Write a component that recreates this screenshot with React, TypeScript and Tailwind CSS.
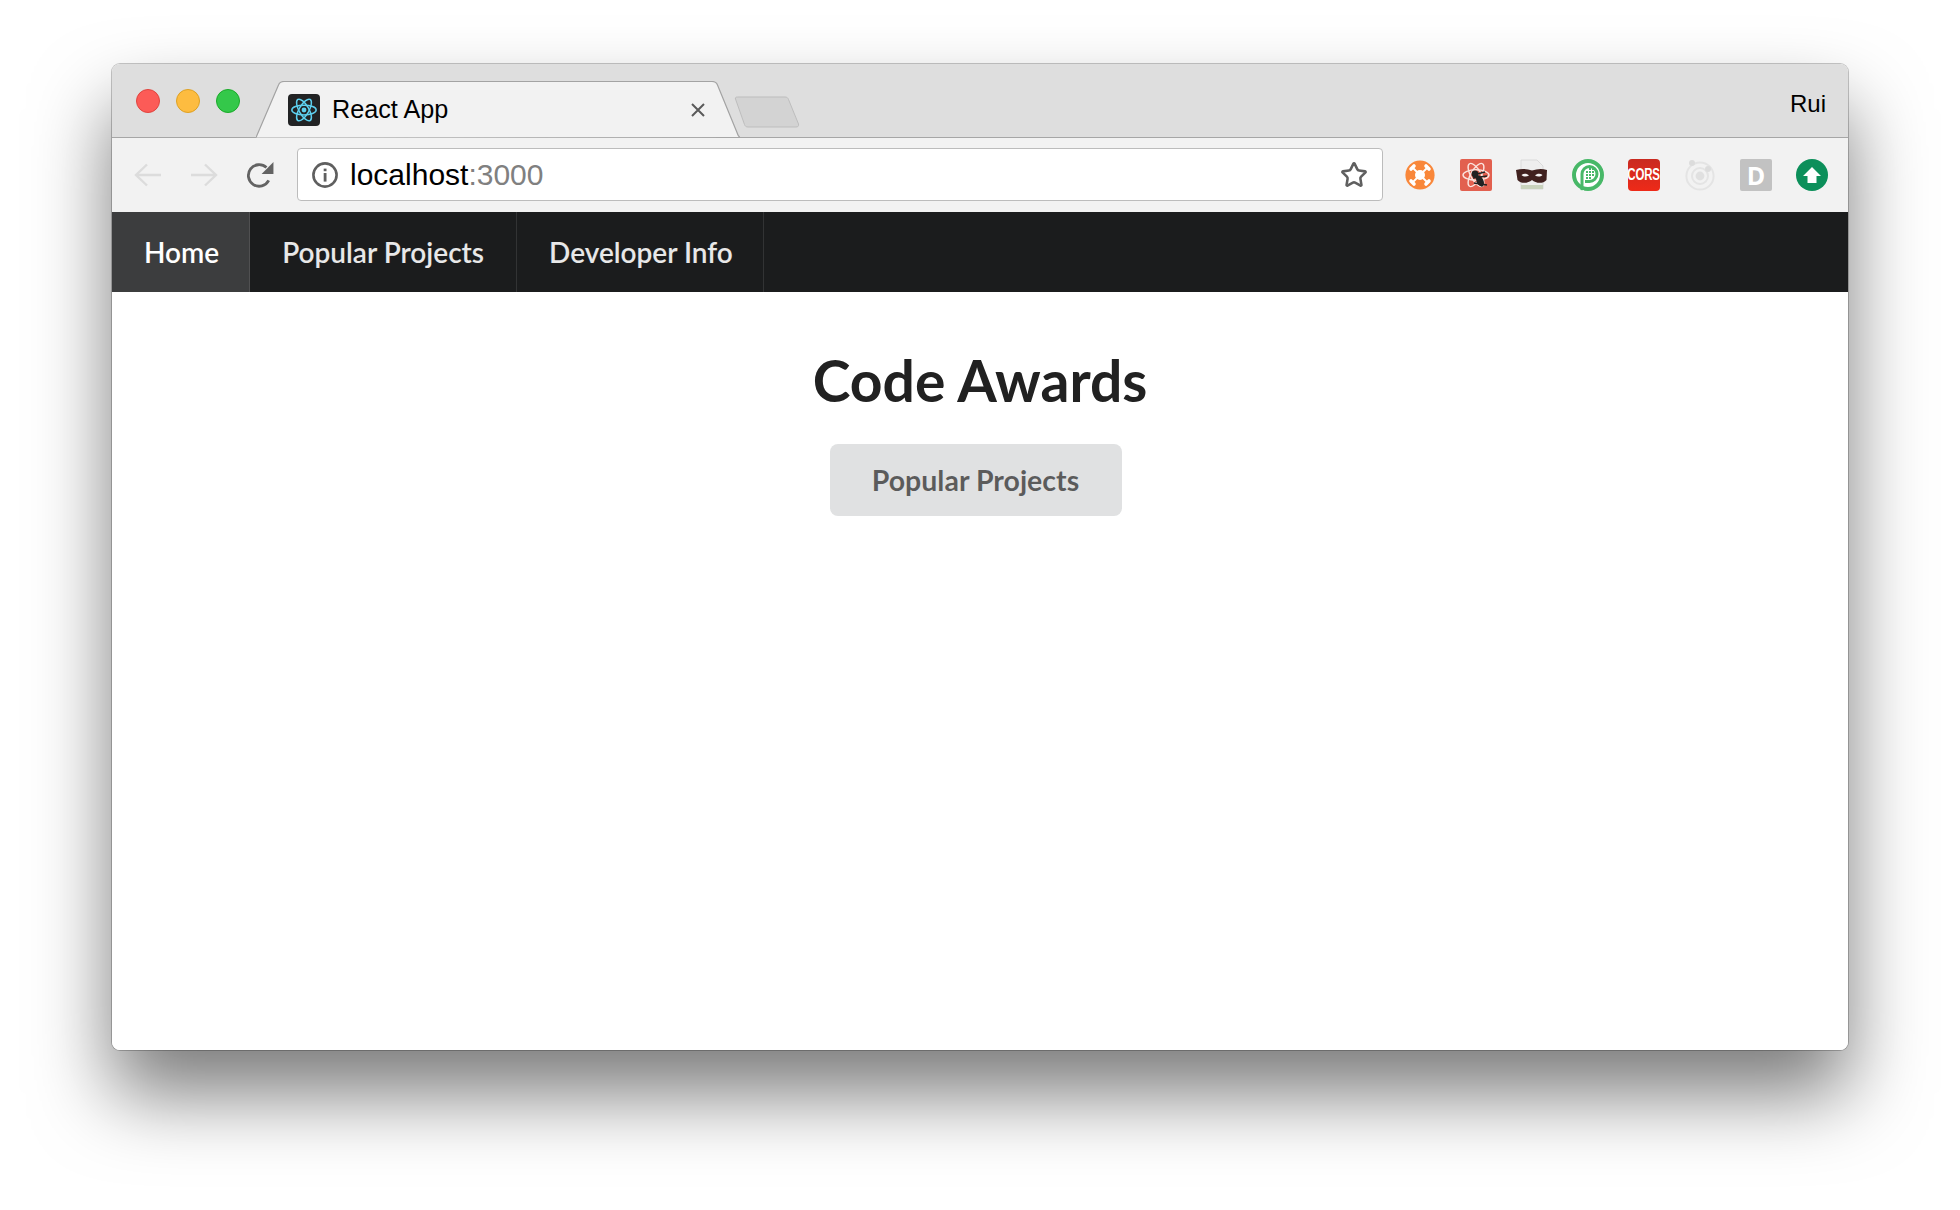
import { Star } from 'lucide-react';

const sfStack = 'font-["Liberation_Sans",Arial,sans-serif]';

function ReactAtom({ color, strokeWidth = 1.6 }: { color: string; strokeWidth?: number }) {
  return (
    <svg viewBox="0 0 32 32" className="w-full h-full" fill="none" stroke={color} strokeWidth={strokeWidth}>
      <ellipse cx="16" cy="16" rx="13" ry="5.2" />
      <ellipse cx="16" cy="16" rx="13" ry="5.2" transform="rotate(60 16 16)" />
      <ellipse cx="16" cy="16" rx="13" ry="5.2" transform="rotate(120 16 16)" />
      <circle cx="16" cy="16" r="2.6" fill={color} stroke="none" />
    </svg>
  );
}

function TabShape() {
  return (
    <svg viewBox="0 0 484 56" className="absolute inset-0 w-full h-full">
      <path
        d="M0 56 L22.5 3.5 C23.5 1 25 0 28 0 L456 0 C459 0 460.5 1 461.5 3.5 L481 51 C482 54 483 55.5 484 55.5"
        fill="#f2f2f2"
        stroke="#a3a3a3"
        strokeWidth="1.2"
      />
    </svg>
  );
}

function NewTabShape() {
  return (
    <svg viewBox="0 0 66 32" className="w-[66px] h-8">
      <path
        d="M1.5 3 C1 1.5 2 1 3.5 1 L51 1 C53 1 54 2 54.5 3.5 L64.5 28 C65 30 64 31 62 31 L14 31 C12 31 11 30 10.5 28.5 Z"
        fill="#d3d3d3"
        stroke="#bdbdbd"
        strokeWidth="1"
      />
    </svg>
  );
}

function NavArrow({ flip }: { flip?: boolean }) {
  return (
    <svg viewBox="0 0 28 24" className={flip ? 'w-7 h-6 -scale-x-100' : 'w-7 h-6'} fill="none" stroke="#dcdcdc" strokeWidth="2.4">
      <path d="M27 12 H2 M13 1.5 L2 12 L13 22.5" />
    </svg>
  );
}

function Reload() {
  return (
    <svg viewBox="1.5 0.5 26 26" className="w-7 h-7">
      <path d="M22.6 18.5 A10 10 0 1 1 20.5 6.6" fill="none" stroke="#636363" strokeWidth="2.6" />
      <path d="M27 1.5 V12.5 H16 Z" fill="#636363" />
    </svg>
  );
}

function InfoIcon() {
  return (
    <svg viewBox="0 0 28 28" className="w-7 h-7">
      <circle cx="14" cy="14" r="11.6" fill="none" stroke="#5f5f5f" strokeWidth="2.6" />
      <rect x="12.7" y="12" width="2.8" height="8.6" fill="#5f5f5f" />
      <rect x="12.7" y="7.6" width="2.8" height="2.6" fill="#5f5f5f" />
    </svg>
  );
}

function ExtensionIcons() {
  return (
    <div className="flex items-center gap-6 ml-[21px] mr-5">
      {/* naranja, hub */}
      <svg viewBox="0 0 32 32" className="w-8 h-8">
        <circle cx="16" cy="16" r="14.6" fill="#f9873a" />
        <path d="M9 9 L23 23 M23 9 L9 23" stroke="#fff" strokeWidth="1.8" />
        <g stroke="#fff" strokeWidth="3.6" strokeLinecap="round">
          <path d="M7 10 L10 7 M22 7 L25 10 M7 22 L10 25 M22 25 L25 22" />
        </g>
        <circle cx="16" cy="16" r="5" fill="#fff" />
      </svg>
      {/* react devtools con bicho */}
      <div className="relative w-8 h-8 rounded-[2px] bg-[#e2604f]">
        <ReactAtom color="#fbe4df" strokeWidth={1.4} />
        <svg viewBox="0 0 32 32" className="absolute inset-0 w-8 h-8">
          <circle cx="15" cy="15" r="3.4" fill="#222" />
          <ellipse cx="20" cy="22" rx="3.4" ry="6" fill="#222" transform="rotate(-25 20 22)" />
          <path d="M13 19 L27 17 M14 24 L27 26 M17 15 L25 13" stroke="#222" strokeWidth="1.6" />
        </svg>
      </div>
      {/* documento con antifaz */}
      <svg viewBox="0 0 32 32" className="w-8 h-8">
        <path d="M5 1 H21 L27 7 V30 H5 Z" fill="#eeeeee" stroke="#d4d4d4" strokeWidth="0.8" />
        <rect x="5" y="26" width="22" height="4" fill="#c9d2bd" />
        <path d="M0 11 C6 9.5 11 10 16 11.5 C21 10 26 9.5 31 11 L30.5 21 C27 25 20 24.5 16 21 C12 24.5 5 25 1.5 21 Z" fill="#40211f" />
        <path d="M5.5 16 C8 14 11 14.5 13 16.5 C10.5 18 7.5 18 5.5 16 Z" fill="#f4f4f4" />
        <path d="M26.5 16 C24 14 21 14.5 19 16.5 C21.5 18 24.5 18 26.5 16 Z" fill="#f4f4f4" />
      </svg>
      {/* verde, circulo con p */}
      <svg viewBox="0 0 32 32" className="w-8 h-8">
        <circle cx="16" cy="16" r="14" fill="#fff" stroke="#48b868" strokeWidth="4" />
        <path d="M10 32 V15 A7.5 7.5 0 1 1 17.5 22.5 H13" fill="none" stroke="#48b868" strokeWidth="3" />
        <path d="M8 32 H12" stroke="#fff" strokeWidth="1.5" />
        <g fill="#48b868">
          <rect x="17" y="9" width="2" height="2" />
          <rect x="20" y="9" width="2" height="2" />
          <rect x="14" y="12" width="2" height="2" />
          <rect x="17" y="12" width="2" height="2" />
          <rect x="20" y="12" width="2" height="2" />
          <rect x="14" y="15" width="2" height="2" />
          <rect x="17" y="15" width="2" height="2" />
          <rect x="20" y="15" width="2" height="2" />
          <rect x="14" y="18" width="2" height="2" />
          <rect x="17" y="18" width="2" height="2" />
        </g>
      </svg>
      {/* CORS */}
      <div className="w-8 h-8 rounded-[4px] bg-gradient-to-b from-[#c92a20] to-[#ee2a18] flex items-center justify-center overflow-hidden">
        <span className='text-white font-bold text-[16px] leading-none tracking-[-0.3px] scale-x-[0.72] font-["Liberation_Sans",sans-serif]'>
          CORS
        </span>
      </div>
      {/* ionic apagado */}
      <svg viewBox="0 0 32 32" className="w-8 h-8" fill="none" stroke="#e4e4e4">
        <circle cx="16" cy="17" r="13.6" strokeWidth="2" />
        <circle cx="16" cy="17" r="8" strokeWidth="2" />
        <circle cx="16" cy="17" r="4.4" fill="#e0e0e0" stroke="none" />
        <circle cx="8" cy="4" r="3" fill="#dcdcdc" stroke="none" />
        <circle cx="24" cy="10" r="3" fill="#dcdcdc" stroke="none" />
      </svg>
      {/* D */}
      <div className="w-8 h-8 rounded-[2px] bg-[#c2c2c2] flex items-center justify-center">
        <span className='text-white font-bold text-[25px] leading-none font-["Open_Sans",sans-serif]'>D</span>
      </div>
      {/* subir */}
      <svg viewBox="0 0 32 32" className="w-8 h-8">
        <circle cx="16" cy="16" r="16" fill="#0c8f5a" />
        <path d="M16 8 L25 17 H20.5 V24 H11.5 V17 H7 Z" fill="#fff" />
      </svg>
    </div>
  );
}

export default function App() {
  return (
    <div className="min-h-[1210px] bg-white pt-16 pl-[112px] overflow-hidden">
      <div className="w-[1736px] h-[986px] rounded-[8px] bg-white overflow-hidden flex flex-col shadow-[0_0_0_1px_rgba(0,0,0,0.22),0_44px_78px_rgba(0,0,0,0.52)]">
        {/* Barra de titulo */}
        <div className="h-[74px] shrink-0 bg-[#dedede] border-b border-[#a6a6a6] flex items-center">
          <div className="flex gap-4 ml-6">
            <span className="w-6 h-6 rounded-full bg-[#fc5b57] border border-[#e0443e]" />
            <span className="w-6 h-6 rounded-full bg-[#fdbc40] border border-[#dea123]" />
            <span className="w-6 h-6 rounded-full bg-[#34c84a] border border-[#1aab29]" />
          </div>
          <div className="relative w-[484px] h-[57px] ml-4 self-end -mb-px">
            <TabShape />
            <div className="relative h-full flex items-center pl-8 pr-[35px]">
              <div className="w-8 h-8 rounded-[4px] bg-[#222324] p-px">
                <ReactAtom color="#5ed0ef" />
              </div>
              <span className={`ml-3 text-[25.2px] text-black ${sfStack}`}>React App</span>
              <svg viewBox="0 0 14 14" className="w-3.5 h-3.5 ml-auto" stroke="#5a5a5a" strokeWidth="2">
                <path d="M1 1 L13 13 M13 1 L1 13" />
              </svg>
            </div>
          </div>
          <div className="-ml-[6px] mt-[22px]">
            <NewTabShape />
          </div>
          <span className={`ml-auto mr-[22px] mt-[6px] text-[24px] text-black ${sfStack}`}>Rui</span>
        </div>

        {/* Barra de direcciones */}
        <div className="h-[74px] shrink-0 bg-[#f2f2f2] flex items-center">
          <div className="flex items-center gap-7 ml-[22px]">
            <NavArrow />
            <NavArrow flip />
            <Reload />
          </div>
          <div className="flex-1 h-[53px] mb-px ml-[23px] bg-white border border-[#bcbcbc] rounded-[4px] flex items-center pl-[13px] pr-[14px]">
            <InfoIcon />
            <span className={`ml-[11px] text-[30px] text-black ${sfStack}`}>
              localhost<span className="text-[#808080]">:3000</span>
            </span>
            <Star size={28} strokeWidth={2.2} color="#5f5f5f" className="ml-auto" />
          </div>
          <ExtensionIcons />
        </div>

        {/* Menu */}
        <nav className='h-20 shrink-0 bg-[#1b1c1d] flex text-[28px] font-["Lato",sans-serif] font-semibold text-white/90'>
          <a className="pl-8 pr-[30px] flex items-center border-r border-white/10 bg-white/15 text-white">Home</a>
          <a className="px-8 flex items-center border-r border-white/10">Popular Projects</a>
          <a className="pl-8 pr-[30px] flex items-center border-r border-white/10">Developer Info</a>
        </nav>

        {/* Contenido */}
        <main className='flex-1 bg-white text-center font-["Lato",sans-serif]'>
          <h1 className="mt-[56px] mb-8 text-[57px] leading-[64px] font-bold text-[#212121]">Code Awards</h1>
          <button className="h-[72px] w-[292px] mr-[9px] rounded-[8px] bg-[#e0e1e2] text-[28.5px] font-bold text-black/60">
            Popular Projects
          </button>
        </main>
      </div>
    </div>
  );
}
